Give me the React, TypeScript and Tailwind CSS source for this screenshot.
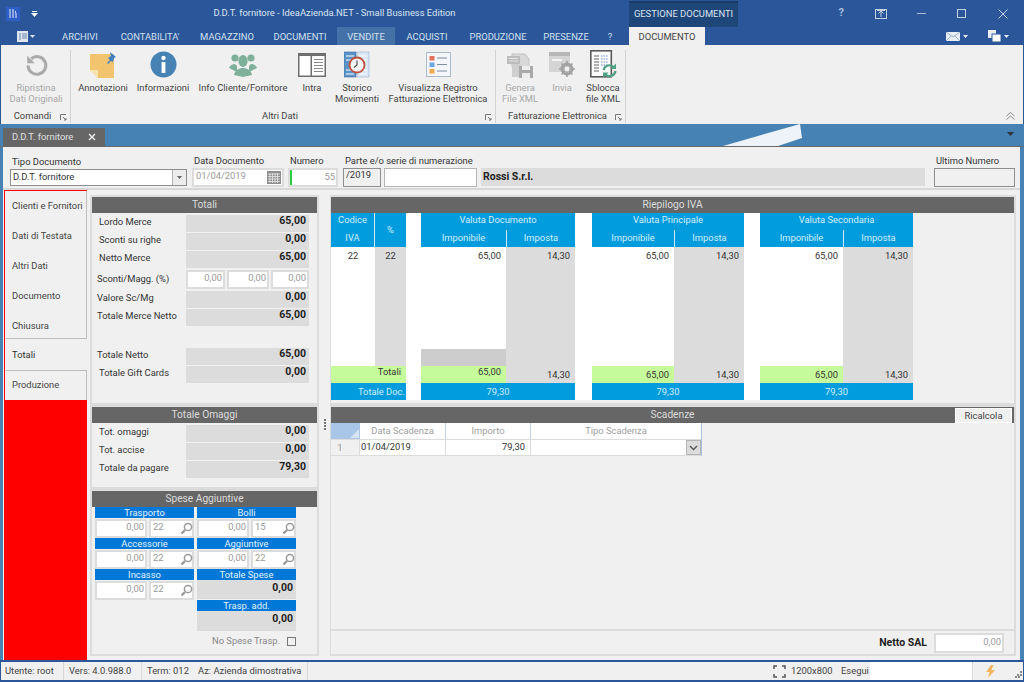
import { ReactNode } from "react";

const tabs = [
  { label: "ARCHIVI", w: "w-[58px]" },
  { label: "CONTABILITA'", w: "w-[82px]" },
  { label: "MAGAZZINO", w: "w-[72px]" },
  { label: "DOCUMENTI", w: "w-[74px]" },
  { label: "VENDITE", w: "w-[58px] bg-[#4472a8]" },
  { label: "ACQUISTI", w: "w-[64px]" },
  { label: "PRODUZIONE", w: "w-[78px]" },
  { label: "PRESENZE", w: "w-[58px]" },
  { label: "?", w: "w-[30px]" },
];

function Launcher() {
  return (
    <svg width="7" height="7" viewBox="0 0 7 7" fill="none" stroke="#777" strokeWidth="1">
      <path d="M.5 6V.5H6M3 3l3 3M6 4v2H4" />
    </svg>
  );
}

function RestoreIcon() {
  return (
    <svg width="23" height="23" viewBox="0 0 26 26" fill="none">
      <path d="M7 6.500A10 10 0 1 1 3.500 14" stroke="#aaa" strokeWidth="3.400" />
      <path d="M2.500 3v8.500H11z" fill="#aaa" />
    </svg>
  );
}

function NoteIcon() {
  return (
    <svg width="28" height="28" viewBox="0 0 28 28">
      <path d="M1 3h24v24H9l-8-8z" fill="#f2c46d" />
      <path d="M1 19h8v8z" fill="#fbe3ae" />
      <path d="M21 1l6 5-2 1-1 4-2-1-3 3-1-1 3-3-2-2 3-2z" fill="#3f7fc0" />
    </svg>
  );
}

function InfoIcon() {
  return (
    <svg width="27" height="27" viewBox="0 0 27 27">
      <circle cx="13.500" cy="13.500" r="13" fill="#4682b4" />
      <circle cx="13.500" cy="7" r="2.200" fill="#fff" />
      <rect x="11.600" y="11" width="3.800" height="11" fill="#fff" />
    </svg>
  );
}

function PeopleIcon() {
  return (
    <svg width="28" height="24" viewBox="0 0 28 24" fill="#7fb09a">
      <circle cx="6" cy="5" r="3.600" />
      <circle cx="22" cy="5" r="3.600" />
      <path d="M0 15c1-3 4-4 6-4l2 2v6z" />
      <path d="M28 15c-1-3-4-4-6-4l-2 2v6z" />
      <ellipse cx="14" cy="8" rx="4.600" ry="6" />
      <path d="M5 22c1-5 5-7 9-7s8 2 9 7l-9 2z" />
    </svg>
  );
}

function IntraIcon() {
  return (
    <svg width="28" height="24" viewBox="0 0 28 24">
      <rect width="28" height="24" fill="#6e6e6e" />
      <rect x="1.500" y="3" width="11" height="19.500" fill="#fff" />
      <rect x="14" y="3" width="12.500" height="19.500" fill="#fff" />
      <path d="M16 6.500h9M16 9.500h9M16 12.500h9M16 15.500h9M16 18.500h9" stroke="#8a8a8a" strokeWidth="1" />
    </svg>
  );
}

function HistoryIcon() {
  return (
    <svg width="26" height="27" viewBox="0 0 26 27">
      <rect x="0" y="1" width="12" height="25" fill="#5b93c9" stroke="#3d6d9c" strokeWidth=".6" />
      <rect x="13" y="1" width="12" height="25" fill="#d9e6f3" stroke="#9db6cf" strokeWidth=".6" />
      <path d="M2 5h8M2 9h8M2 19h8M15 5h8M15 9h8M15 19h8M2 23h8M15 23h8" stroke="#fff" strokeWidth="1" />
      <circle cx="13" cy="14" r="7.500" fill="#f4f4f4" stroke="#c0503f" strokeWidth="1.800" />
      <path d="M13 9.500V14l-3 2.500" fill="none" stroke="#444" strokeWidth="1.100" />
    </svg>
  );
}

function RegisterIcon() {
  return (
    <svg width="25" height="25" viewBox="0 0 25 25">
      <rect x=".5" y=".5" width="24" height="24" fill="#f4f6fb" stroke="#a9b9d2" />
      <rect x="3.500" y="4" width="5" height="4.500" fill="#e2735a" />
      <rect x="3.500" y="10.500" width="5" height="4.500" fill="#6ea5dc" />
      <rect x="3.500" y="17" width="5" height="4.500" fill="#eda94e" />
      <path d="M11 6h10M11 12.500h10M11 19h10" stroke="#7d8ca5" strokeWidth="1" />
    </svg>
  );
}

function GenerateIcon() {
  return (
    <svg width="26" height="28" viewBox="0 0 26 28">
      <path d="M5 3h13l4 5v8H5z" fill="#d9d9d9" stroke="#c4c4c4" />
      <rect x="0" y="5" width="13" height="8" fill="#bdbdbd" />
      <path d="M2 7.500h9M2 10h9" stroke="#e4e4e4" strokeWidth="1" />
      <rect x="5" y="13" width="9" height="13" fill="#cfcfcf" />
      <rect x="12" y="15" width="14" height="12" fill="#a9a9a9" />
      <rect x="15" y="15" width="8" height="4" fill="#ececec" />
      <rect x="15" y="22" width="8" height="5" fill="#ececec" />
    </svg>
  );
}

function SendIcon() {
  return (
    <svg width="26" height="25" viewBox="0 0 26 25">
      <rect x="0" y="0" width="21" height="20" fill="#d4d4d4" />
      <rect x="0" y="0" width="21" height="4" fill="#b6b6b6" />
      <rect x="3" y="7" width="10" height="2" fill="#f2f2f2" />
      <circle cx="18" cy="17" r="5" fill="none" stroke="#a2a2a2" strokeWidth="3" />
      <path d="M18 9v16M10 17h16M12.500 11.500l11 11M23.500 11.500l-11 11" stroke="#a2a2a2" strokeWidth="1.600" />
      <circle cx="18" cy="17" r="2.400" fill="#f0f0f0" />
    </svg>
  );
}

function UnlockIcon() {
  return (
    <svg width="27" height="29" viewBox="0 0 27 29">
      <rect x=".8" y=".8" width="20.500" height="26" fill="#fafafa" stroke="#5a5a5a" strokeWidth="1.600" />
      <path d="M4 6h5M4 9h5M4 12h5M4 15h5M4 18h5M4 21h5" stroke="#666" strokeWidth="1.200" />
      <path d="M11 6h7M11 9h7M11 12h7M11 15h7" stroke="#6c95c4" strokeWidth="1.200" strokeDasharray="1.500 1" />
      <path d="M13.500 20a6 6 0 0 1 10.500-2.500M25.500 21a6 6 0 0 1-10.500 3" fill="none" stroke="#4fa283" strokeWidth="2.200" />
      <path d="M26 13.500v5.500h-5.500zM13 28v-5.500h5.500z" fill="#4fa283" />
    </svg>
  );
}

function RibbonButton({ w, icon, lines, off }: { w: string; icon: ReactNode; lines: string[]; off?: boolean }) {
  return (
    <div className={`flex flex-col items-center ${w} ${off ? "text-[#a8a8a8]" : "text-[#444]"}`}>
      <div className="h-[35px] flex items-center justify-center">{icon}</div>
      {lines.map((l) => (
        <div key={l} className="leading-[11px]">
          {l}
        </div>
      ))}
    </div>
  );
}

function RibbonGroup({ w, label, pl, children }: { w: string; label: string; pl: string; children: ReactNode }) {
  return (
    <div className={`${w} flex flex-col h-[73px] mt-[5px] border-r border-[#d2d2d2]`}>
      <div className={`flex flex-1 -mt-[3px] ${pl}`}>{children}</div>
      <div className="h-[16px] pt-[2px] flex items-center text-[#444] relative">
        <div className="flex-1 text-center pr-[6px]">{label}</div>
        <div className="absolute right-[3px] top-[7px] flex">
          <Launcher />
        </div>
      </div>
    </div>
  );
}

function PanelHead({ title, children }: { title: string; children?: ReactNode }) {
  return (
    <div className="h-[16px] bg-[#666666] text-[#dcdcdc] text-[10.2px] leading-[16px] text-center relative">
      {title}
      {children}
    </div>
  );
}

function ValueRow({ label, value, pl = "pl-[7px]" }: { label: string; value: string; pl?: string }) {
  return (
    <div className="flex items-center h-[18px]">
      <div className={`w-[94px] ${pl} text-[#333] -mt-[1px]`}>{label}</div>
      <div className="w-[123px] h-[17px] bg-[#dcdcdc] text-right pr-[3px] text-[10.5px] leading-[11px] text-[#222] font-bold">{value}</div>
    </div>
  );
}

function Box({ w, children, left }: { w: string; children?: ReactNode; left?: boolean }) {
  return (
    <div className={`${w} h-[19px] bg-white border-2 border-[#dcdcdc] text-[#999] leading-[12px] px-[1px] ${left ? "text-left pl-[2px]" : "text-right"}`}>
      {children}
    </div>
  );
}

function Lens() {
  return (
    <svg width="13" height="13" viewBox="0 0 13 13" fill="none" stroke="#9a9a9a" className="absolute right-[1px] top-[3px]">
      <circle cx="8" cy="5" r="3.600" strokeWidth="1.500" />
      <path d="M5 8l-3.500 3.500" strokeWidth="2.400" />
    </svg>
  );
}

function ExpenseCell({ label, value, code }: { label: string; value: string; code: string }) {
  return (
    <div className="w-[99px]">
      <div className="h-[11px] bg-[#0078d7] text-[#e6f2fb] text-center leading-[11px]">{label}</div>
      <div className="flex justify-between mt-[1px]">
        <Box w="w-[52px]">{value}</Box>
        <div className="relative">
          <Box w="w-[45px]" left>
            {code}
          </Box>
          <Lens />
        </div>
      </div>
    </div>
  );
}

function ExpenseTotal({ label, h, mt }: { label: string; h: string; mt?: string }) {
  return (
    <div className={`w-[99px] ${mt ?? ""}`}>
      <div className="h-[11px] bg-[#0078d7] text-[#e6f2fb] text-center leading-[11px]">{label}</div>
      <div className={`${h} bg-[#dcdcdc] text-right pr-[3px] pt-[1px] text-[10.5px] font-bold text-[#222] leading-[13px]`}>0,00</div>
    </div>
  );
}

function CurrencyBlock({ title, w, impW, doc, mx }: { title: string; w: string; impW: string; doc?: boolean; mx?: string }) {
  return (
    <div className={`${w} ${mx ?? ""} flex flex-col`}>
      <div className="h-[34px] bg-[#009cde] text-[#d4eefa]">
        <div className="h-[17px] leading-[14px] text-center">{title}</div>
        <div className="flex h-[17px] leading-[16px] text-center">
          <div className={`${impW} border-r border-[#cfe9f7]`}>Imponibile</div>
          <div className="flex-1">Imposta</div>
        </div>
      </div>
      <div className="flex flex-1">
        <div className={`${impW} flex flex-col border-r border-[#dcdcdc]`}>
          <div className="flex-1 bg-white text-right pr-[5px] pt-[2px] text-[#333]">65,00</div>
          {doc && <div className="h-[17px] bg-[#cdcdcd]" />}
          <div className={`h-[17px] bg-[#c6fb9b] text-right pr-[5px] text-[#333] ${doc ? "leading-[12px]" : "leading-[17px]"}`}>65,00</div>
        </div>
        <div className="flex-1 bg-[#dcdcdc] flex flex-col justify-between text-right pr-[5px] pt-[2px] text-[#333]">
          <div>14,30</div>
          <div className="leading-[17px]">14,30</div>
        </div>
      </div>
      <div className="h-[17px] bg-[#009cde] text-[#d4eefa] text-center leading-[17px]">79,30</div>
    </div>
  );
}

export default function App() {
  return (
    <div className="w-[1024px] h-[682px] overflow-hidden flex flex-col bg-[#2b579a] font-['Roboto','Noto_Sans',sans-serif] text-[9.4px] whitespace-nowrap">
      {/* title bar */}
      <div className="h-[27px] flex text-[#dbe5f2]">
        <div className="w-[40px] flex items-center pl-[6px] gap-[11px]">
          <div className="w-[14px] h-[14px] bg-[#2f5fc4] flex items-center justify-center">
            <svg width="8" height="11" viewBox="0 0 8 11" fill="none" stroke="#e5ecfa" strokeWidth="1">
              <path d="M1 1v9M4 1v9M7 3c-1 0-1 2 0 2v5" />
            </svg>
          </div>
          <svg width="7" height="6" viewBox="0 0 7 6" fill="#fff">
            <path d="M1 0h5v1H1zM0 2h7L3.500 6z" />
          </svg>
        </div>
        <div className="w-[589px] flex items-center justify-center">
          <span>D.D.T. fornitore - IdeaAzienda.NET - Small Business Edition</span>
        </div>
        <div className="w-[109px] mt-[1px] bg-[#1f4679] border-t-2 border-[#1b3c69] text-center leading-[22px] text-[#dbe5f2]">GESTIONE DOCUMENTI</div>
        <div className="flex-1 flex items-center text-[#cfdbeb]">
          <div className="w-[123px] text-right pr-[17px] font-bold text-[11px] text-[#a9bdd8]">?</div>
          <div className="w-[40px] flex justify-center">
            <svg width="12" height="10" viewBox="0 0 12 10" fill="none" stroke="#c4d2e5">
              <rect x=".5" y=".5" width="11" height="9" />
              <path d="M6 8V3M3.500 4.500L6 2l2.500 2.500M2 1.500h8" />
            </svg>
          </div>
          <div className="w-[40px] flex justify-center">
            <div className="w-[9px] h-px bg-[#a9bdd8]" />
          </div>
          <div className="w-[41px] flex justify-center">
            <div className="w-[9px] h-[9px] border border-[#c4d2e5]" />
          </div>
          <div className="w-[41px] flex justify-center">
            <svg width="10" height="10" viewBox="0 0 10 10" stroke="#c4d2e5">
              <path d="M.5.500l9 9M9.500.500l-9 9" />
            </svg>
          </div>
        </div>
      </div>
      {/* ribbon tabs */}
      <div className="h-[18px] flex text-[#d4e0ef] leading-[20px] text-center">
        <div className="w-[51px] flex items-center pl-[17px] gap-[2px]">
          <svg width="11" height="11" viewBox="0 0 11 11">
            <rect width="11" height="11" fill="#dfe6f0" />
            <path d="M3 2v7M5 3h5M5 5h5M5 7h5" stroke="#6f88ab" strokeWidth="1" />
          </svg>
          <svg width="5" height="3" viewBox="0 0 5 3" fill="#dfe6f0">
            <path d="M0 0h5L2.500 3z" />
          </svg>
        </div>
        {tabs.map((t) => (
          <div key={t.label} className={t.w}>
            {t.label}
          </div>
        ))}
        <div className="w-[4px]" />
        <div className="w-[76px] bg-[#f0f0f0] text-[#444]">DOCUMENTO</div>
        <div className="flex-1 flex items-center justify-end pr-[15px]">
          <svg width="14" height="9" viewBox="0 0 14 9" className="mr-[3px]">
            <rect width="14" height="9" fill="#e8eef6" />
            <path d="M0 0l7 5 7-5M0 9l5-5M14 9L9 4" stroke="#8aa3c4" fill="none" strokeWidth=".8" />
          </svg>
          <svg width="5" height="3" viewBox="0 0 5 3" fill="#e8eef6" className="mr-[20px]">
            <path d="M0 0h5L2.500 3z" />
          </svg>
          <svg width="13" height="12" viewBox="0 0 13 12" className="mr-[3px]">
            <rect x="0" y="0" width="8" height="8" fill="#e8eef6" />
            <rect x="4" y="4" width="9" height="8" fill="#fff" stroke="#2b579a" />
          </svg>
          <svg width="5" height="3" viewBox="0 0 5 3" fill="#e8eef6">
            <path d="M0 0h5L2.500 3z" />
          </svg>
        </div>
      </div>
      {/* ribbon */}
      <div className="h-[79px] mx-[1px] bg-[#f0f0f0] flex relative">
        <RibbonGroup w="w-[70px]" label="Comandi" pl="pl-[6px]">
          <RibbonButton w="w-[58px]" off icon={<RestoreIcon />} lines={["Ripristina", "Dati Originali"]} />
        </RibbonGroup>
        <RibbonGroup w="w-[425px]" label="Altri Dati" pl="pl-[2px]">
          <RibbonButton w="w-[60px]" icon={<NoteIcon />} lines={["Annotazioni"]} />
          <RibbonButton w="w-[60px]" icon={<InfoIcon />} lines={["Informazioni"]} />
          <RibbonButton w="w-[100px]" icon={<PeopleIcon />} lines={["Info Cliente/Fornitore"]} />
          <RibbonButton w="w-[38px]" icon={<IntraIcon />} lines={["Intra"]} />
          <RibbonButton w="w-[52px]" icon={<HistoryIcon />} lines={["Storico", "Movimenti"]} />
          <RibbonButton w="w-[110px]" icon={<RegisterIcon />} lines={["Visualizza Registro", "Fatturazione Elettronica"]} />
        </RibbonGroup>
        <RibbonGroup w="w-[130px]" label="Fatturazione Elettronica" pl="pl-[2px]">
          <RibbonButton w="w-[44px]" off icon={<GenerateIcon />} lines={["Genera", "File XML"]} />
          <RibbonButton w="w-[40px]" off icon={<SendIcon />} lines={["Invia"]} />
          <RibbonButton w="w-[42px]" icon={<UnlockIcon />} lines={["Sblocca", "file XML"]} />
        </RibbonGroup>
        <div className="flex-1 flex justify-end items-end pr-[8px] pb-[4px]">
          <svg width="9" height="8" viewBox="0 0 9 8" fill="none" stroke="#888">
            <path d="M.5 4L4.500.500 8.500 4M.5 7.500L4.500 4l4 3.500" />
          </svg>
        </div>
      </div>
      {/* workspace */}
      <div className="flex-1 bg-[#4682b4] flex flex-col">
        <div className="h-[23px] flex items-end pl-[3px] border-b border-[#6a6a6a] relative pr-[10px]">
          <div className="w-[102px] h-[18px] bg-[#666666] text-[#e0e0e0] flex items-center pl-[9px] justify-between pr-[9px]">
            <span>D.D.T. fornitore</span>
            <svg width="8" height="8" viewBox="0 0 8 8" stroke="#f0f0f0" strokeWidth="1.400">
              <path d="M1 1l6 6M7 1L1 7" />
            </svg>
          </div>
          <svg width="80" height="23" viewBox="0 0 80 23" className="absolute left-[723px] top-0">
            <path d="M0 22L77 0l2 14-24 8z" fill="#eef3f9" />
          </svg>
          <svg width="7" height="4" viewBox="0 0 7 4" fill="#333" className="ml-auto mb-[10px]">
            <path d="M0 0h7L3.500 4z" />
          </svg>
        </div>
        <div className="h-[513px] ml-[3px] mr-[4px] bg-[#f0f0f0] flex flex-col">
          {/* document header */}
          <div className="h-[43px] flex items-end pb-[1px] text-[#333] border-b-2 border-[#d8d8d8]">
            <div className="w-[7px]" />
            <div className="w-[182px] mb-[1px]">
              <div className="pl-[2px] h-[13px] leading-[11px]">Tipo Documento</div>
              <div className="w-[177px] h-[17px] bg-white border border-[#8e8e8e] flex items-center pl-[2px]">
                <span className="flex-1">D.D.T. fornitore</span>
                <div className="w-[14px] h-full bg-[#ececec] border-l border-[#b5b5b5] flex items-center justify-center">
                  <svg width="5" height="3" viewBox="0 0 5 3" fill="#666">
                    <path d="M0 0h5L2.500 3z" />
                  </svg>
                </div>
              </div>
            </div>
            <div className="w-[96px]">
              <div className="pl-[2px] h-[15px] leading-[16px]">Data Documento</div>
              <div className="w-[92px] h-[19px] bg-white border-2 border-[#dcdcdc] flex items-center pl-[2px] text-[#999]">
                <span className="flex-1 -mt-[2px]">01/04/2019</span>
                <svg width="14" height="13" viewBox="0 0 14 13" className="mr-[1px]">
                  <rect width="14" height="13" fill="#8d8d8d" />
                  <path d="M1 3h12M1 5.500h12M1 8h12M1 10.500h12M3 2v10M5.500 2v10M8 2v10M10.500 2v10" stroke="#e9e9e9" strokeWidth=".8" />
                </svg>
              </div>
            </div>
            <div className="w-[55px]">
              <div className="pl-[2px] h-[15px] leading-[16px]">Numero</div>
              <div className="w-[50px] h-[19px] bg-white border-2 border-[#dcdcdc] flex text-[#999]">
                <div className="w-[2px] h-full bg-[#2ecc40]" />
                <div className="flex-1 text-right pr-[1px] leading-[13px]">55</div>
              </div>
            </div>
            <div className="w-[134px] flex flex-col">
              <div className="pl-[2px] h-[15px] leading-[16px]">Parte e/o serie di numerazione</div>
              <div className="flex">
                <div className="w-[38px] h-[19px] bg-[#f0f0f0] border border-[#8e8e8e] pl-[2px] leading-[12px]">/2019</div>
                <div className="w-[93px] h-[19px] ml-[3px] bg-white border border-[#b5b5b5]" />
              </div>
            </div>
            <div className="w-[444px] h-[18px] ml-[4px] mb-[1px] bg-[#dcdcdc] pl-[2px] text-[10.5px] font-bold leading-[18px] text-[#222]">Rossi S.r.l.</div>
            <div className="ml-[9px]">
              <div className="pl-[2px] h-[15px] leading-[16px]">Ultimo Numero</div>
              <div className="w-[81px] h-[19px] bg-[#f0f0f0] border border-[#8e8e8e]" />
            </div>
          </div>
          {/* main */}
          <div className="flex-1 flex min-h-0">
            <div className="w-[83px] ml-[1px] flex flex-col bg-[#ff0000] pt-[1px]">
              <div className="h-[148px] ml-[1px] bg-[#f0f0f0] border-r border-b border-[#bdbdbd] text-[#444] pl-[7px]">
                {["Clienti e Fornitori", "Dati di Testata", "Altri Dati", "Documento", "Chiusura"].map((s) => (
                  <div key={s} className="h-[30px] leading-[30px]">
                    {s}
                  </div>
                ))}
              </div>
              <div className="h-[31px] ml-[1px] -mr-[1px] bg-[#f0f0f0] text-[#333] pl-[7px] leading-[32px]">Totali</div>
              <div className="h-[30px] ml-[1px] bg-[#f0f0f0] border-t border-r border-[#bdbdbd] text-[#444] pl-[7px] leading-[28px]">Produzione</div>
            </div>
            <div className="w-[3px]" />
            {/* left column */}
            <div className="w-[229px] flex flex-col pt-[5px] pb-[4px]">
              <div className="h-[210px] border-2 border-[#dcdcdc]">
                <PanelHead title="Totali" />
                <div className="pt-[1px]">
                  <ValueRow label="Lordo Merce" value="65,00" />
                  <ValueRow label="Sconti su righe" value="0,00" />
                  <ValueRow label="Netto Merce" value="65,00" />
                  <div className="flex items-center h-[22px]">
                    <div className="w-[94px] pl-[5px] text-[#333]">Sconti/Magg. (%)</div>
                    <div className="flex gap-[2px]">
                      <Box w="w-[39px]">0,00</Box>
                      <Box w="w-[42px]">0,00</Box>
                      <Box w="w-[38px]">0,00</Box>
                    </div>
                  </div>
                  <ValueRow label="Valore Sc/Mg" value="0,00" pl="pl-[5px]" />
                  <ValueRow label="Totale Merce Netto" value="65,00" pl="pl-[5px]" />
                  <div className="h-[21px]" />
                  <ValueRow label="Totale Netto" value="65,00" pl="pl-[5px]" />
                  <ValueRow label="Totale Gift Cards" value="0,00" />
                </div>
              </div>
              <div className="h-[84px] border-2 border-[#dcdcdc]">
                <PanelHead title="Totale Omaggi" />
                <div className="pt-[1px]">
                  <ValueRow label="Tot. omaggi" value="0,00" />
                  <ValueRow label="Tot. accise" value="0,00" />
                  <ValueRow label="Totale da pagare" value="79,30" />
                </div>
              </div>
              <div className="flex-1 border-2 border-[#dcdcdc]">
                <PanelHead title="Spese Aggiuntive" />
                <div className="pl-[3px] flex gap-[3px]">
                  <div className="flex flex-col">
                    <ExpenseCell label="Trasporto" value="0,00" code="22" />
                    <ExpenseCell label="Accessorie" value="0,00" code="22" />
                    <ExpenseCell label="Incasso" value="0,00" code="22" />
                  </div>
                  <div className="flex flex-col">
                    <ExpenseCell label="Bolli" value="0,00" code="15" />
                    <ExpenseCell label="Aggiuntive" value="0,00" code="22" />
                    <ExpenseTotal label="Totale Spese" h="h-[19px]" />
                    <ExpenseTotal label="Trasp. add." h="h-[20px]" mt="mt-[1px]" />
                    <div className="flex items-center justify-end gap-[7px] mt-[2px] text-[#888] h-[16px]">
                      <span>No Spese Trasp.</span>
                      <div className="w-[9px] h-[9px] border border-[#777] bg-[#f0f0f0]" />
                    </div>
                  </div>
                </div>
              </div>
            </div>
            {/* splitter */}
            <div className="w-[11px] flex flex-col items-center pt-[229px] gap-[1px]">
              {[0, 1, 2, 3].map((i) => (
                <div key={i} className="w-[2px] h-[2px] bg-[#777]" />
              ))}
            </div>
            {/* right column */}
            <div className="w-[686px] flex flex-col pt-[5px] pb-[4px]">
              <div className="h-[210px] border-2 border-[#dcdcdc] border-l-1">
                <PanelHead title="Riepilogo IVA" />
                <div className="flex h-[187px] text-[#333]">
                  <div className="w-[582px] flex bg-white">
                    <div className="w-[75px] flex flex-col">
                      <div className="h-[34px] flex bg-[#009cde] text-[#d4eefa] text-center">
                        <div className="w-[44px] border-r border-[#cfe9f7] leading-[16px]">
                          <div className="h-[17px] leading-[14px]">Codice</div>
                          <div>IVA</div>
                        </div>
                        <div className="flex-1 leading-[34px]">%</div>
                      </div>
                      <div className="flex-1 flex text-center">
                        <div className="w-[44px] pt-[2px]">22</div>
                        <div className="flex-1 bg-[#dcdcdc] pt-[2px]">22</div>
                      </div>
                      <div className="h-[17px] bg-[#c6fb9b] text-right pr-[5px] leading-[12px]">Totali</div>
                      <div className="h-[17px] bg-[#009cde] text-[#d4eefa] text-right pr-[1px] leading-[17px]">Totale Doc.</div>
                    </div>
                    <CurrencyBlock title="Valuta Documento" w="w-[154px]" impW="w-[86px]" doc mx="ml-[15px]" />
                    <CurrencyBlock title="Valuta Principale" w="w-[152px]" impW="w-[83px]" mx="ml-[17px]" />
                    <CurrencyBlock title="Valuta Secondaria" w="w-[153px]" impW="w-[84px]" mx="ml-[16px]" />
                  </div>
                </div>
              </div>
              <div className="flex-1 border-2 border-[#dcdcdc] border-l-1 flex flex-col">
                <PanelHead title="Scadenze">
                  <div className="absolute right-[2px] top-[1px] w-[57px] h-[15px] bg-[#f0f0f0] border border-white text-[#444] text-[9.4px] leading-[13px]">Ricalcola</div>
                </PanelHead>
                <div className="w-[371px] border-r border-[#a9c0de]">
                  <div className="h-[16px] flex bg-white text-[#a0a0a0] text-center leading-[16px]">
                    <div className="w-[29px] bg-[#a9c6e8] flex items-end justify-end p-[1px]">
                      <svg width="9" height="9" viewBox="0 0 9 9" fill="#d5e4f5">
                        <path d="M9 0v9H0z" />
                      </svg>
                    </div>
                    <div className="w-[86px] border-r border-[#c3d3e8]">Data Scadenza</div>
                    <div className="w-[85px] border-r border-[#c3d3e8]">Importo</div>
                    <div className="flex-1">Tipo Scadenza</div>
                  </div>
                  <div className="h-[17px] flex bg-white border-y border-[#dcdcdc] text-[#333] leading-[13px]">
                    <div className="w-[29px] bg-[#f0f0f0] border-r border-[#dcdcdc] text-center text-[#999] pr-[10px] leading-[16px]">1</div>
                    <div className="w-[86px] border-r border-[#dcdcdc] pl-[1px]">01/04/2019</div>
                    <div className="w-[85px] border-r border-[#dcdcdc] text-right pr-[5px]">79,30</div>
                    <div className="flex-1 flex justify-end">
                      <div className="w-[15px] h-[15px] bg-[#dcdcdc] border border-[#b5b5b5] flex items-center justify-center">
                        <svg width="9" height="6" viewBox="0 0 9 6" fill="none" stroke="#555" strokeWidth="1.400">
                          <path d="M1 1l3.500 3.500L8 1" />
                        </svg>
                      </div>
                    </div>
                  </div>
                </div>
                <div className="flex-1" />
                <div className="h-[25px] border-t-2 border-[#dcdcdc] flex items-center justify-end pr-[10px]">
                  <span className="font-bold text-[10.5px] text-[#222] mr-[7px]">Netto SAL</span>
                  <div className="w-[70px] h-[20px] bg-white border-2 border-[#dcdcdc] text-right text-[#999] pr-[1px] leading-[13px]">0,00</div>
                </div>
              </div>
            </div>
          </div>
        </div>
      </div>
      {/* status bar */}
      <div className="h-[18px] mb-[2px] mx-[1px] mt-[2px] bg-[#f0f0f0] flex items-center text-[#444]">
        <div className="w-[63px] pl-[4px] h-full leading-[18px] border-r border-[#d8d8d8]">Utente: root</div>
        <div className="w-[78px] pl-[5px] h-full leading-[18px] border-r border-[#d8d8d8]">Vers: 4.0.988.0</div>
        <div className="w-[52px] pl-[5px] leading-[18px]">Term: 012</div>
        <div className="w-[114px] pl-[4px] h-full leading-[18px] border-r border-[#d8d8d8]">Az: Azienda dimostrativa</div>
        <div className="flex-1" />
        <svg width="13" height="13" viewBox="0 0 13 13" fill="none" stroke="#555" strokeWidth="1.500" className="mr-[5px]">
          <path d="M1 4V1h3M9 1h3v3M12 9v3H9M4 12H1V9" />
        </svg>
        <span className="w-[50px]">1200x800</span>
        <span className="w-[29px]">Esegui</span>
        <div className="w-[102px] h-full bg-white" />
        <div className="w-[51px] h-full border-l border-[#d8d8d8] flex items-center relative pl-[13px]">
          <svg width="9" height="13" viewBox="0 0 9 13" fill="#f3b55f">
            <path d="M5 0L0 7h3.500L2 13l7-8H5.500L7.500 0z" />
          </svg>
          <svg width="7" height="7" viewBox="0 0 7 7" fill="#888" className="absolute right-[1px] bottom-[2px]">
            <path d="M5 0h2v2H5zM2 3h2v2H2zM5 3h2v2H5zM0 5h2v2H0zM3 5h2v2H3z" />
          </svg>
        </div>
      </div>
    </div>
  );
}
